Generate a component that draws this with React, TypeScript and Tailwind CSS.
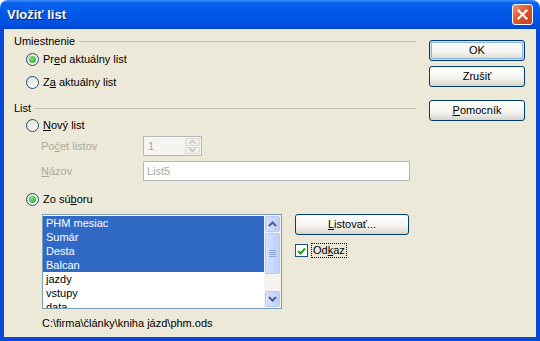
import React from "react";

const font = "font-['Tahoma','Liberation_Sans',sans-serif]";

function Radio({ checked }: { checked?: boolean }) {
  return (
    <span className="w-[13px] h-[13px] shrink-0 rounded-full border border-[#1C5180] bg-[linear-gradient(135deg,#DCDCD5,#FFFFFF)] flex items-center justify-center">
      {checked && (
        <span className="w-[7px] h-[7px] rounded-full bg-[radial-gradient(circle_at_35%_35%,#7BE17A,#21A121)]" />
      )}
    </span>
  );
}

function Header({ label }: { label: string }) {
  return (
    <div className="h-[13px] flex items-center">
      <span className="leading-[13px]">{label}</span>
      <span className="flex-1 h-px bg-[#C2BFAE] ml-[4px]" />
    </div>
  );
}

function XpButton({ children, main, className = "" }: { children: React.ReactNode; main?: boolean; className?: string }) {
  return (
    <div
      className={
        "h-[21px] rounded-[3px] border border-[#003C74] bg-[linear-gradient(to_bottom,#FFFFFF_0%,#F4F3EE_60%,#D8D4C8_100%)] flex items-center justify-center " +
        (main ? "shadow-[inset_0_0_0_1px_#CEE0FB,inset_0_0_0_2px_#8FB2EC] " : "") +
        className
      }
    >
      {children}
    </div>
  );
}

function ScrollArrow({ up }: { up?: boolean }) {
  return (
    <div className="h-[16px] mx-px rounded-[2px] border border-[#B8CBF4] bg-[linear-gradient(to_right,#D5E2FE,#BDD0FB)] flex items-center justify-center">
      <svg width="9" height="6" viewBox="0 0 9 6">
        <path d={up ? "M1 5 L4.5 1.5 L8 5" : "M1 1 L4.5 4.5 L8 1"} fill="none" stroke="#4D6185" strokeWidth="2" />
      </svg>
    </div>
  );
}

export default function App() {
  const items = ["PHM mesiac", "Sumár", "Desta", "Balcan", "jazdy", "vstupy", "data"];
  return (
    <div className={"w-[540px] h-[341px] flex flex-col text-[11px] text-black " + font}>
      {/* Title bar */}
      <div className="h-[29px] shrink-0 rounded-t-[8px] bg-[linear-gradient(to_bottom,#3D8EF8_0%,#0A62F0_10%,#0058E8_45%,#0054E3_75%,#0046D6_100%)] flex items-center pl-[7px] pr-[7px]">
        <span className="flex-1 text-white font-bold text-[13px] font-['Liberation_Sans',sans-serif] [text-shadow:1px_1px_0_#0A1E6E]">
          Vložiť list
        </span>
        <div className="w-[21px] h-[21px] rounded-[3px] border border-white bg-[linear-gradient(135deg,#F0906E,#D8502A_55%,#C2411D)] flex items-center justify-center">
          <svg width="11" height="11" viewBox="0 0 11 11">
            <path d="M1.5 1.5 L9.5 9.5 M9.5 1.5 L1.5 9.5" stroke="white" strokeWidth="2.2" strokeLinecap="square" />
          </svg>
        </div>
      </div>

      {/* Body */}
      <div className="flex-1 border-x-4 border-b-4 border-[#0848D8] bg-[#ECE9D8] flex pl-[10px] pt-[6px]">
        {/* Left column */}
        <div className="w-[402px] flex flex-col">
          <Header label="Umiestnenie" />
          <div className="mt-[3px] h-[16px] flex items-center pl-[12px] gap-[4px]">
            <Radio checked />
            <span>
              Pr<span className="underline">e</span>d aktuálny list
            </span>
          </div>
          <div className="mt-[7px] h-[16px] flex items-center pl-[12px] gap-[4px]">
            <Radio />
            <span>
              Z<span className="underline">a</span> aktuálny list
            </span>
          </div>

          <div className="mt-[12px]">
            <Header label="List" />
          </div>
          <div className="mt-[2px] h-[16px] flex items-center pl-[12px] gap-[4px]">
            <Radio />
            <span>
              <span className="underline">N</span>ový list
            </span>
          </div>
          <div className="mt-[3px] h-[20px] flex items-center pl-[27px] text-[#ACA899]">
            <span className="w-[102px]">
              Po<span className="underline">č</span>et listov
            </span>
            <div className="w-[59px] h-[20px] border border-[#B5B9BE] bg-[#F5F4EE] flex items-center">
              <span className="flex-1 pl-[4px]">1</span>
              <div className="w-[15px] h-[16px] mr-px flex flex-col gap-px">
                <div className="flex-1 rounded-[1px] border border-[#DDDAD0] bg-[#F0EFE9] flex items-center justify-center">
                  <svg width="7" height="4" viewBox="0 0 7 4"><path d="M0.5 3.5 L3.5 0.5 L6.5 3.5" fill="none" stroke="#C3C1B5" strokeWidth="1.4" /></svg>
                </div>
                <div className="flex-1 rounded-[1px] border border-[#DDDAD0] bg-[#F0EFE9] flex items-center justify-center">
                  <svg width="7" height="4" viewBox="0 0 7 4"><path d="M0.5 0.5 L3.5 3.5 L6.5 0.5" fill="none" stroke="#C3C1B5" strokeWidth="1.4" /></svg>
                </div>
              </div>
            </div>
          </div>
          <div className="mt-[5px] h-[20px] flex items-center pl-[27px] text-[#ACA899]">
            <span className="w-[102px]">
              <span className="underline">N</span>ázov
            </span>
            <div className="w-[267px] h-[20px] border border-[#B5B9BE] bg-white flex items-center pl-[3px]">
              List5
            </div>
          </div>
          <div className="mt-[10px] h-[16px] flex items-center pl-[12px] gap-[4px]">
            <Radio checked />
            <span>
              Zo sú<span className="underline">b</span>oru
            </span>
          </div>

          <div className="mt-[7px] flex pl-[28px]">
            {/* List box */}
            <div className="w-[240px] h-[95px] border border-[#7F9DB9] bg-white flex overflow-hidden">
              <div className="flex-1 flex flex-col pt-px overflow-hidden">
                {items.map((it, i) => (
                  <div
                    key={it}
                    className={
                      "h-[14px] shrink-0 leading-[14px] pl-[3px] " + (i < 4 ? "bg-[#316AC5] text-white" : "")
                    }
                  >
                    {it}
                  </div>
                ))}
              </div>
              <div className="w-[17px] bg-[#F4F3EE] flex flex-col pt-px pb-px">
                <ScrollArrow up />
                <div className="mt-px h-[41px] mx-px rounded-[2px] border border-[#B8CBF4] bg-[linear-gradient(to_right,#D5E2FE,#BDD0FB)] flex flex-col items-center justify-center gap-px">
                  <span className="w-[7px] h-px bg-[#8EA5DD]" />
                  <span className="w-[7px] h-px bg-[#8EA5DD]" />
                  <span className="w-[7px] h-px bg-[#8EA5DD]" />
                  <span className="w-[7px] h-px bg-[#8EA5DD]" />
                </div>
                <div className="flex-1" />
                <ScrollArrow />
              </div>
            </div>

            <div className="ml-[13px] flex flex-col">
              <XpButton className="w-[114px]">
                <span>
                  <span className="underline">L</span>istovať...
                </span>
              </XpButton>
              <div className="mt-[8px] flex items-center gap-[3px]">
                <span className="w-[13px] h-[13px] border border-[#1C5180] bg-white flex items-center justify-center">
                  <svg width="9" height="8" viewBox="0 0 9 8">
                    <path d="M1 4 L3.5 6.5 L8 1.5" fill="none" stroke="#21A121" strokeWidth="2" />
                  </svg>
                </span>
                <span className="border border-dotted border-black px-px leading-[13px]">
                  Od<span className="underline">k</span>az
                </span>
              </div>
            </div>
          </div>

          <div className="mt-[7px] h-[14px] flex items-center pl-[28px]">
            {"C:\\firma\\články\\kniha jázd\\phm.ods"}
          </div>
        </div>

        {/* Right column */}
        <div className="ml-[13px] w-[96px] flex flex-col pt-[5px]">
          <XpButton main>OK</XpButton>
          <XpButton className="mt-[5px]">Zrušiť</XpButton>
          <XpButton className="mt-[13px]">
            <span>
              <span className="underline">P</span>omocník
            </span>
          </XpButton>
        </div>
      </div>
    </div>
  );
}
